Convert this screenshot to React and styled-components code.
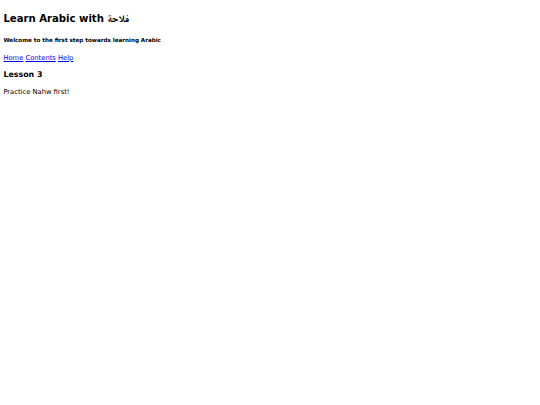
import React from "react";
import styled, { createGlobalStyle } from "styled-components";

const Global = createGlobalStyle`
  body {
    margin: 3.375px;
    background: #ffffff;
    color: #000000;
    font-family: "DejaVu Sans", sans-serif;
    font-size: 6.75px;
  }
`;

const Title = styled.h1`
  font-size: 10.125px;
  font-weight: bold;
  margin: 7.8px 0 3.8px;
`;

const Arabic = styled.span`
  font-family: "Noto Naskh Arabic", "DejaVu Sans", serif;
`;

const Subtitle = styled.h5`
  font-size: 5.6px;
  font-weight: bold;
  margin: 8.35px 0 9.35px;
`;

const Nav = styled.nav`
  margin: 11.3px 0 6.75px;
`;

const NavLink = styled.a`
  color: #0000ee;
  text-decoration: underline;
`;

const LessonTitle = styled.h3`
  font-size: 7.9px;
  font-weight: bold;
  margin: 1em 0;
`;

const Text = styled.p`
  margin: 8.9px 0 6.75px;
`;

export default function App() {
  return (
    <>
      <Global />
      <Title>
        Learn Arabic with <Arabic lang="ar">فلاحة</Arabic>
      </Title>
      <Subtitle>Welcome to the first step towards learning Arabic</Subtitle>
      <Nav>
        <NavLink href="#">Home</NavLink> <NavLink href="#">Contents</NavLink>{" "}
        <NavLink href="#">Help</NavLink>
      </Nav>
      <LessonTitle>Lesson 3</LessonTitle>
      <Text>Practice Nahw first!</Text>
    </>
  );
}
